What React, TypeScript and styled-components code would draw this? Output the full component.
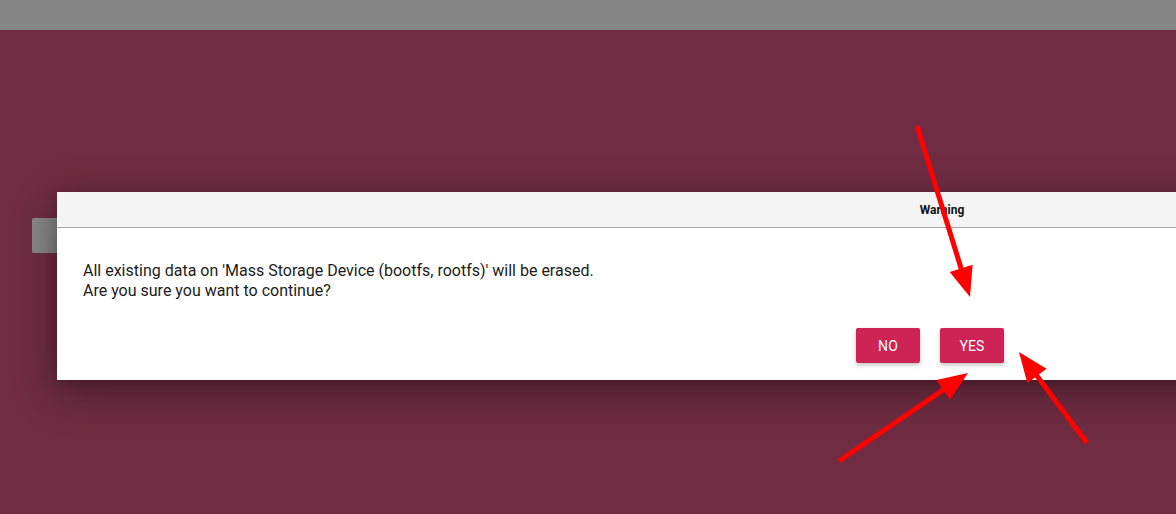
import React from "react";
import styled, { createGlobalStyle } from "styled-components";

const Global = createGlobalStyle`
  html, body { margin: 0; padding: 0; overflow: hidden; }
  body { width: 1176px; height: 514px; font-family: Roboto, "Liberation Sans", sans-serif; }
`;

const Page = styled.div`
  position: relative;
  width: 1176px;
  height: 514px;
  display: flex;
  flex-direction: column;
  background: #6f2c42;
  overflow: hidden;
`;

const TopBar = styled.div`
  height: 30px;
  flex: none;
  background: #868686;
`;

const Main = styled.div`
  flex: 1;
  padding: 188px 0 0 32px;
`;

const GhostButton = styled.div`
  width: 60px;
  height: 35px;
  border-radius: 2px;
  background: linear-gradient(90deg, #888 0%, #7c7c7c 100%);
`;

const Overlay = styled.div`
  position: absolute;
  left: 57px;
  top: 192px;
  width: 1770px;
  height: 188px;
  display: flex;
  flex-direction: column;
  background: #fff;
  box-shadow: 0 12px 40px rgba(0, 0, 0, 0.35), 0 4px 12px rgba(0, 0, 0, 0.15);
`;

const Header = styled.div`
  height: 36px;
  flex: none;
  box-sizing: border-box;
  background: #f4f4f4;
  border-bottom: 1px solid #aaaaaa;
  display: flex;
  align-items: center;
  justify-content: center;
  font-size: 12px;
  font-weight: 700;
  color: #111;
  padding-top: 1px;
`;

const Body = styled.div`
  padding: 33px 0 0 26px;
  font-size: 16px;
  line-height: 20px;
  color: #1c1c1c;
`;

const Footer = styled.div`
  display: flex;
  gap: 20px;
  padding: 27px 0 0 799px;
`;

const ActionButton = styled.button`
  width: 64px;
  height: 35px;
  border: none;
  border-radius: 2px;
  background: #cd2355;
  color: #fff;
  font-family: Roboto, "Liberation Sans", sans-serif;
  font-size: 14px;
  letter-spacing: 0.1px;
  box-shadow: 0 2px 4px rgba(0, 0, 0, 0.25);
  padding: 0;
  cursor: pointer;
`;

const Arrows = styled.svg`
  position: absolute;
  left: 0;
  top: 0;
  pointer-events: none;
`;

type ArrowProps = { x1: number; y1: number; x2: number; y2: number };

const Arrow: React.FC<ArrowProps> = ({ x1, y1, x2, y2 }) => {
  const dx = x2 - x1;
  const dy = y2 - y1;
  const len = Math.hypot(dx, dy);
  const ux = dx / len;
  const uy = dy / len;
  const headLen = 30;
  const headW = 12;
  const bx = x2 - ux * headLen;
  const by = y2 - uy * headLen;
  const px = -uy;
  const py = ux;
  const pts = `${x2},${y2} ${bx + px * headW},${by + py * headW} ${bx - px * headW},${by - py * headW}`;
  return (
    <g>
      <line x1={x1} y1={y1} x2={bx + ux * 4} y2={by + uy * 4} stroke="#ff0000" strokeWidth={5} />
      <polygon points={pts} fill="#ff0000" />
    </g>
  );
};

export default function App() {
  return (
    <>
      <Global />
      <Page>
        <TopBar />
        <Main>
          <GhostButton />
        </Main>
        <Overlay>
          <Header>Warning</Header>
          <Body>
            All existing data on 'Mass Storage Device (bootfs, rootfs)' will be erased.
            <br />
            Are you sure you want to continue?
          </Body>
          <Footer>
            <ActionButton>NO</ActionButton>
            <ActionButton>YES</ActionButton>
          </Footer>
        </Overlay>
        <Arrows width="1176" height="514" viewBox="0 0 1176 514">
          <Arrow x1={917} y1={126} x2={970} y2={297} />
          <Arrow x1={839} y1={461} x2={968} y2={373} />
          <Arrow x1={1087} y1={443} x2={1019} y2={352} />
        </Arrows>
      </Page>
    </>
  );
}
